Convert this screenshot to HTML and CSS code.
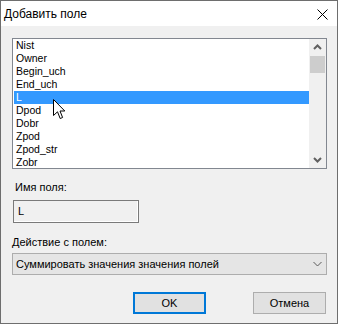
FILE: index.html
```html
<!DOCTYPE html>
<html lang="ru">
<head>
  <meta charset="UTF-8" />
  <title>Добавить поле</title>
  <link rel="stylesheet" href="styles.css">
</head>
<body>

<div class="window">
  <div class="titlebar">
    <span class="title">Добавить поле</span>
    <svg class="close" width="11" height="11" viewBox="0 0 11 11">
      <path d="M0.5 0.5 L10.5 10.5 M10.5 0.5 L0.5 10.5" stroke="#000" stroke-width="1" fill="none"/>
    </svg>
  </div>

  <div class="content">
    <div class="listbox">
      <ul class="items">
        <li>Nist</li>
        <li>Owner</li>
        <li>Begin_uch</li>
        <li>End_uch</li>
        <li class="selected">L</li>
        <li>Dpod</li>
        <li>Dobr</li>
        <li>Zpod</li>
        <li>Zpod_str</li>
        <li>Zobr</li>
      </ul>
      <div class="scrollbar">
        <svg class="arrow" width="17" height="17" viewBox="0 0 17 17">
          <path d="M5 10 L8.5 6.5 L12 10" stroke="#606060" stroke-width="2" fill="none"/>
        </svg>
        <div class="thumb"></div>
        <div class="track"></div>
        <svg class="arrow" width="17" height="17" viewBox="0 0 17 17">
          <path d="M5 7 L8.5 10.5 L12 7" stroke="#606060" stroke-width="2" fill="none"/>
        </svg>
      </div>
      <!-- указатель мыши -->
      <svg class="cursor" width="13" height="21" viewBox="0 0 13 21">
        <path d="M0.5 0.5 L0.5 16.5 L4.5 12.8 L7.2 19.5 L9.6 18.5 L7 12 L11.8 12 Z" fill="#fff" stroke="#000" stroke-width="1" stroke-linejoin="miter"/>
      </svg>
    </div>

    <div class="label first">Имя поля:</div>
    <div class="textbox">L</div>

    <div class="label second">Действие с полем:</div>
    <div class="combo">
      <span>Суммировать значения значения полей</span>
      <svg width="9" height="6" viewBox="0 0 9 6">
        <path d="M0.5 1 L4.5 5 L8.5 1" stroke="#5a5a5a" stroke-width="1" fill="none"/>
      </svg>
    </div>

    <div class="buttons">
      <button class="btn default">OK</button>
      <button class="btn">Отмена</button>
    </div>
  </div>
</div>

</body>
</html>
```

FILE: styles.css
```css
* {
  margin: 0;
  padding: 0;
  box-sizing: border-box;
}

body {
  background: #f0f0f0;
  font-family: 'Liberation Sans', Arial, sans-serif;
  font-size: 11px;
  color: #000;
}

.window {
  width: 338px;
  height: 324px;
  border: 1px solid #6e6e6e;
  background: #f0f0f0;
}

.titlebar {
  height: 25px;
  background: #fff;
  display: flex;
  align-items: center;
  justify-content: space-between;
  padding: 0 9px 0 3px;
}

.title {
  font-size: 12px;
  line-height: 16px;
  margin-top: 1px;
}

.close {
  display: block;
  margin-top: 2px;
}

.content {
  padding: 12px 10px 0 11px;
}

.listbox {
  position: relative;
  display: flex;
  height: 131px;
  border: 1px solid #828790;
  background: #fff;
  overflow: hidden;
}

.items {
  list-style: none;
  flex: 1;
  padding-left: 1px;
  font-size: 10.5px;
}

.items li {
  height: 13px;
  line-height: 13px;
  padding-left: 2px;
  white-space: nowrap;
}

.items li.selected {
  background: #3399ff;
  color: #fff;
}

.scrollbar {
  width: 17px;
  background: #f0f0f0;
  display: flex;
  flex-direction: column;
}

.arrow {
  display: block;
  flex: none;
}

.thumb {
  height: 17px;
  margin: 0 1px;
  background: #cdcdcd;
  flex: none;
}

.track {
  flex: 1;
}

.cursor {
  position: absolute;
  left: 40px;
  top: 60px;
}

.label {
  line-height: 16px;
  white-space: nowrap;
}

.label.first {
  margin: 10px 0 0 3px;
}

.label.second {
  margin: 11px 0 0 0;
}

.textbox {
  width: 126px;
  height: 23px;
  margin: 5px 0 0 1px;
  border: 1px solid #7a7a7a;
  box-shadow: inset -1px -1px 0 #fff;
  padding-left: 4px;
  line-height: 21px;
}

.combo {
  height: 22px;
  margin-top: 3px;
  border: 1px solid #adadad;
  background: #e5e5e5;
  display: flex;
  align-items: center;
  justify-content: space-between;
  padding: 0 4px 0 3px;
}

.combo svg {
  display: block;
}

.buttons {
  display: flex;
  justify-content: flex-end;
  gap: 47px;
  margin-top: 17px;
  padding-right: 1px;
}

.btn {
  width: 73px;
  height: 22px;
  border: 1px solid #adadad;
  background: #e1e1e1;
  font-family: 'Liberation Sans', Arial, sans-serif;
  font-size: 11px;
  color: #000;
}

.btn.default {
  border: 2px solid #0078d7;
}
```
